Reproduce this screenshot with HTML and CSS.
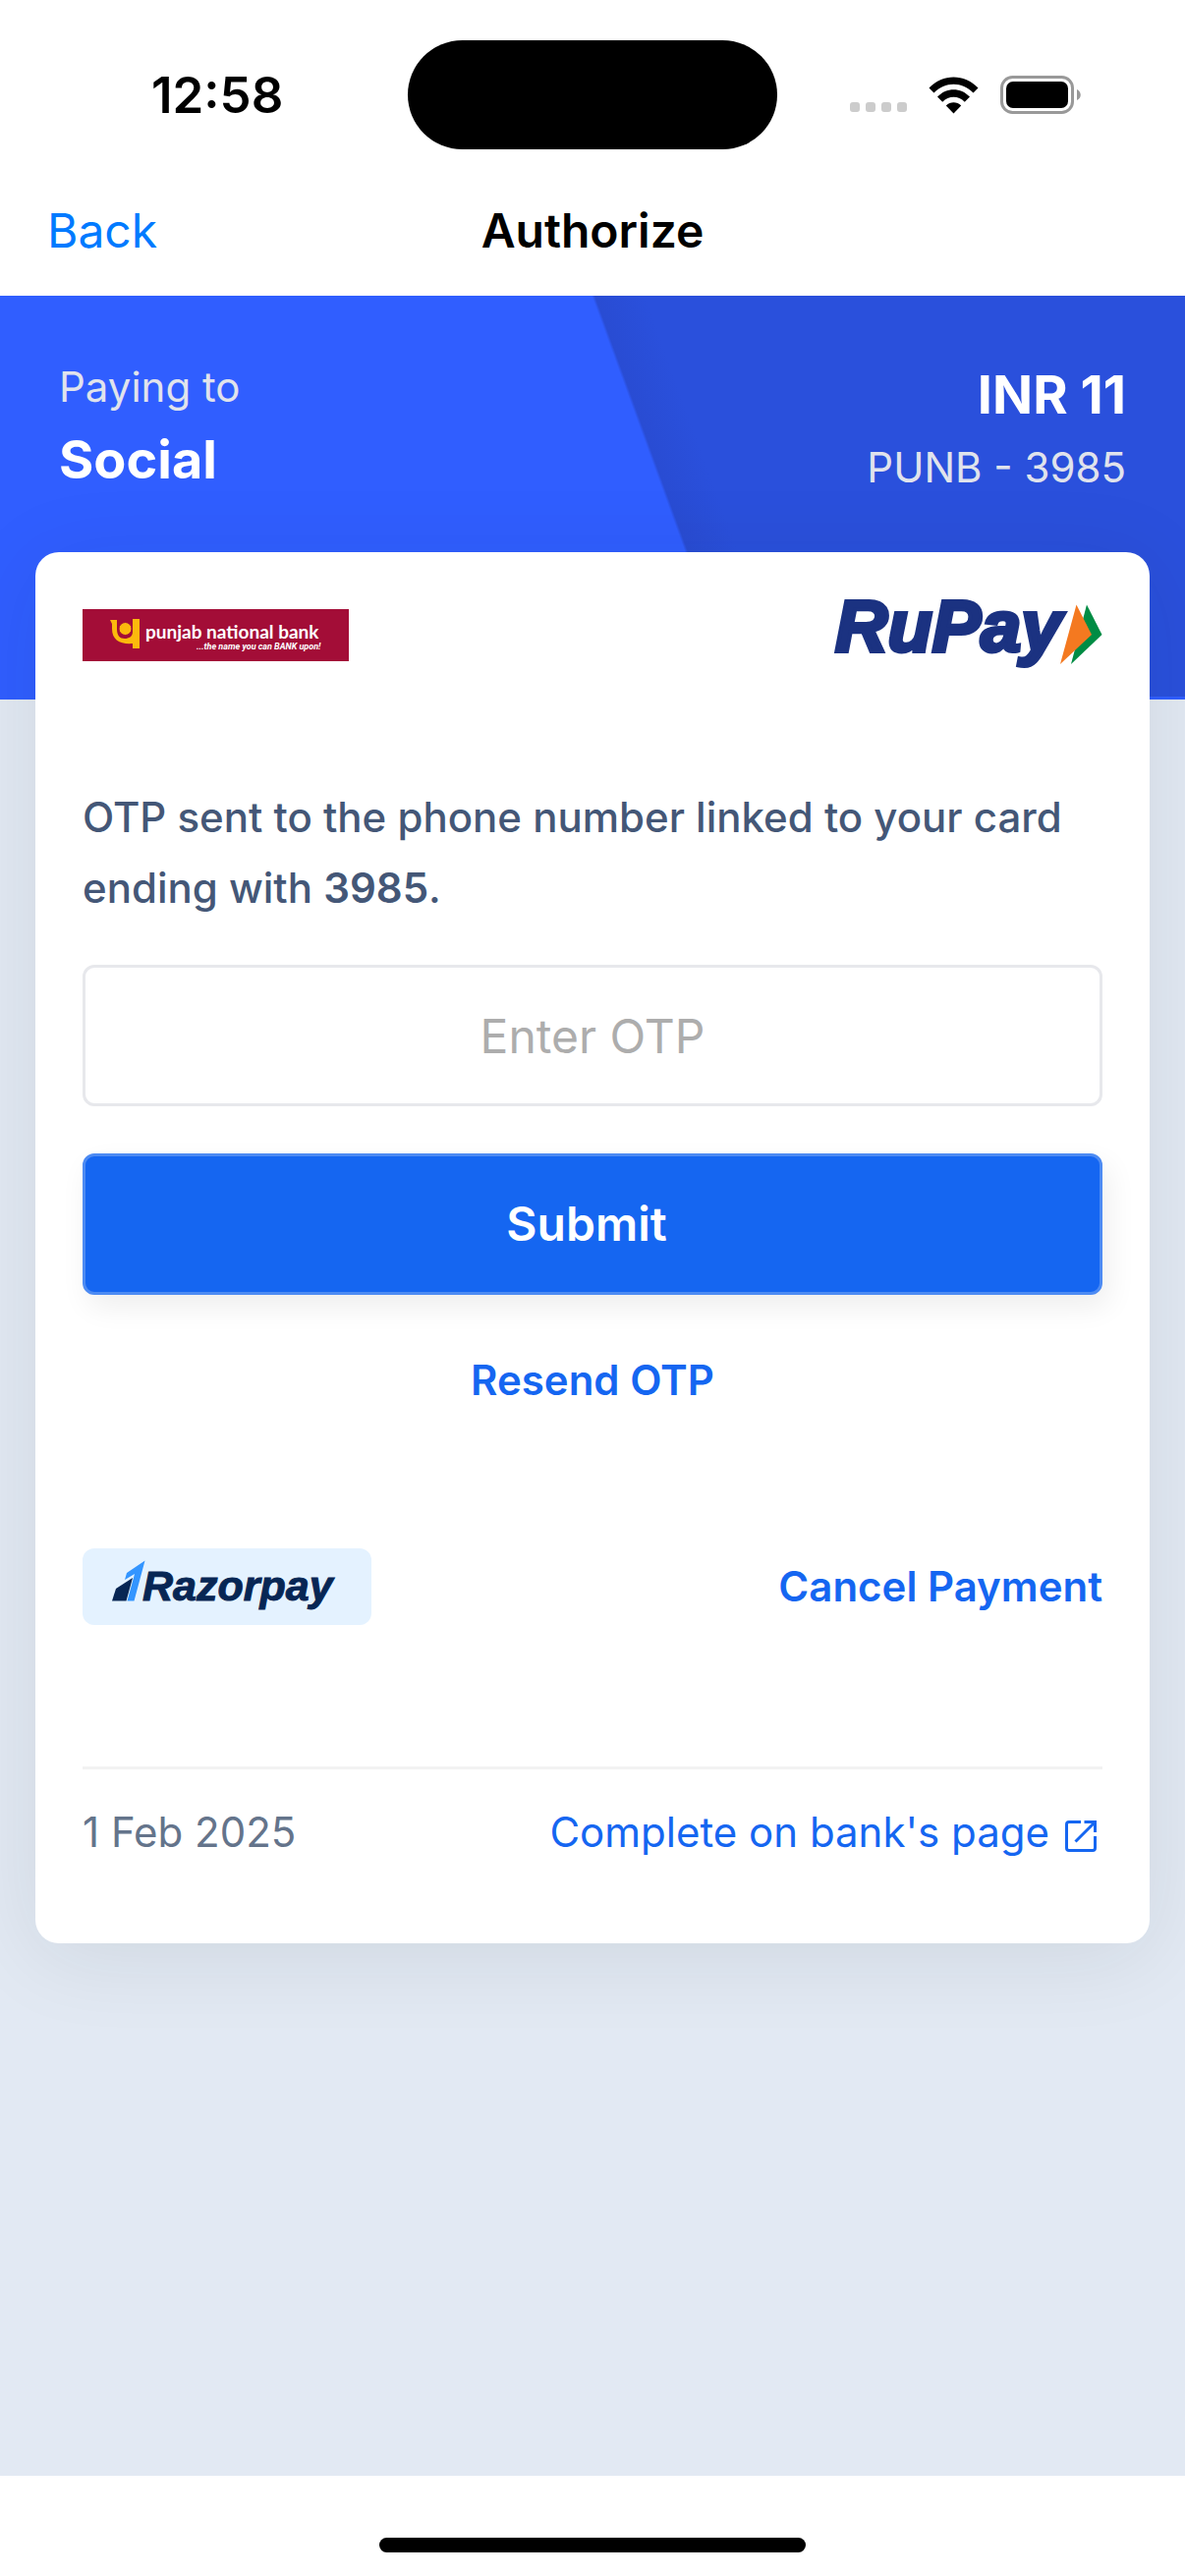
FILE: index.html
```html
<!DOCTYPE html>
<html lang="en">
<head>
<meta charset="utf-8">
<meta name="viewport" content="width=device-width, initial-scale=1">
<title>Authorize</title>
<link rel="stylesheet" href="styles.css">
</head>
<body>
<div class="screen">
  <div class="status">
    <time class="status-time">12:58</time>
    <div class="island"></div>
    <div class="status-icons">
      <svg class="signal" width="58" height="10" viewBox="0 0 58 10" aria-hidden="true">
        <rect width="10" height="10" rx="3"/><rect x="16" width="10" height="10" rx="3"/><rect x="32" width="10" height="10" rx="3"/><rect x="48" width="10" height="10" rx="3"/>
      </svg>
      <svg width="51" height="38" viewBox="0 0 51 38" aria-hidden="true">
        <path d="M0.500 11.500C14.500-3.300 36.500-3.300 50.500 11.500L45.500 16.500C34.500 4.800 16.500 4.800 5.500 16.500Z"/>
        <path d="M9 20.500C18.300 10.700 32.700 10.700 42 20.500L36.800 25.700C30.500 19.200 20.500 19.200 14.200 25.700Z"/>
        <path d="M17.800 29.500C22.200 25.300 28.800 25.300 33.200 29.500L25.500 37.500Z"/>
      </svg>
      <svg width="82" height="39" viewBox="0 0 82 39" aria-hidden="true">
        <rect x="1.500" y="1.500" width="72" height="36" rx="11" fill="none" stroke="#999" stroke-width="3"/>
        <rect x="6" y="6" width="63" height="27" rx="7"/>
        <path d="M78 14C83 16.500 83 23 78 25Z" fill="#999"/>
      </svg>
    </div>
  </div>

  <nav class="nav">
    <a class="nav-back" href="#">Back</a>
    <h1 class="nav-title">Authorize</h1>
  </nav>

  <main class="page">
    <header class="summary">
      <div class="summary-side">
        <span class="summary-label">Paying to</span>
        <strong class="summary-value">Social</strong>
      </div>
      <div class="summary-side summary-side-end">
        <strong class="summary-value">INR 11</strong>
        <span class="summary-label">PUNB - 3985</span>
      </div>
    </header>

    <section class="card">
      <div class="row">
        <svg width="271" height="53" viewBox="0 0 271 53" role="img" aria-label="Punjab National Bank">
          <rect width="271" height="53" fill="#a30d37"/>
          <path d="M28 11h7v9c0 7 3 10 8 10 4 0 8-2 8-7V10h7v30h-7v-5C39 36 30 32 30 20V15z" fill="#fcb90d"/>
          <circle cx="43.500" cy="20" r="6.500" fill="#fcb90d" stroke="#a30d37" stroke-width="1"/>
          <text class="pnb-name" x="64" y="30">punjab national bank</text>
          <text class="pnb-tag" x="116" y="41">...the name you can BANK upon!</text>
        </svg>
        <svg class="rupay" width="273" height="72" viewBox="0 0 273 72" role="img" aria-label="RuPay">
          <text class="rupay-name" x="1" y="53">RuPay</text>
          <path d="M257 5.500 272.500 36 241 66Z" fill="#008c44"/>
          <path d="M246.500 5.500 262 36 230 66Z" fill="#f47920"/>
        </svg>
      </div>

      <form class="otp-form">
        <label class="message" for="otp">OTP sent to the phone number linked to your card ending with <b>3985</b>.</label>
        <input class="otp-input" id="otp" type="text" inputmode="numeric" placeholder="Enter OTP">
        <button class="submit" type="submit">Submit</button>
        <button class="resend" type="button">Resend OTP</button>
      </form>

      <div class="row">
        <div class="razorpay">
          <svg width="240" height="54" viewBox="0 0 240 54" role="img" aria-label="Razorpay">
            <path d="M33.500 0.500 22.500 41.500H15.500L23 14 13 20 15 13Z" fill="#3395ff"/>
            <path d="M21 18 14.500 41.500H0L4 29Z" fill="#072654"/>
            <text class="razorpay-name" x="31" y="41">Razorpay</text>
          </svg>
        </div>
        <a class="cancel" href="#">Cancel Payment</a>
      </div>

      <footer class="row card-footer">
        <span class="date">1 Feb 2025</span>
        <a class="bank-link" href="#">Complete on bank's page
          <svg width="38" height="40" viewBox="0 0 38 40" fill="none" stroke="currentColor" stroke-width="3" aria-hidden="true">
            <path d="M16 9.500H4Q1.500 9.500 1.500 12V36Q1.500 38.500 4 38.500H28Q30.500 38.500 30.500 36V24M19.500 9.500H30.500V20M30.500 9.500 10.500 29.500"/>
          </svg>
        </a>
      </footer>
    </section>
  </main>

  <div class="home"><span class="home-bar"></span></div>
</div>
</body>
</html>
```
FILE: styles.css
```css
* {
  box-sizing: border-box;
}

body {
  margin: 0;
  font-family: Inter, "Liberation Sans", sans-serif;
  font-size: 42px;
  line-height: 66px;
  color: #000;
  background: #fff;
}

a {
  color: inherit;
  text-decoration: none;
}

svg {
  display: block;
  flex: none;
}

.screen {
  display: flex;
  flex-direction: column;
  min-height: 100vh;
}

/* Device status bar */
.status {
  display: grid;
  grid-template-columns: 1fr 376px 1fr;
  align-items: center;
  padding: 41px 0 17px;
}

.status-time {
  padding-left: 154px;
  font-size: 51px;
  font-weight: 600;
}

.island {
  height: 111px;
  border-radius: 56px;
  background: #000;
}

.status-icons {
  display: flex;
  align-items: center;
  justify-content: flex-end;
  gap: 22px;
  padding-right: 106px;
}

.signal {
  align-self: flex-end;
  margin-bottom: 2px;
  fill: #ccc;
}

/* Navigation bar */
.nav {
  display: grid;
  grid-template-columns: 1fr auto 1fr;
  align-items: center;
  min-height: 132px;
  padding: 0 48px;
  font-size: 48px;
}

.nav-back {
  color: #007aff;
}

.nav-title {
  margin: 0;
  font-size: 48px;
  font-weight: 600;
}

/* Payment summary */
.page {
  flex: 1;
  background: #e2e9f3;
}

.summary {
  display: flex;
  justify-content: space-between;
  padding: 60px 60px 203px;
  color: #fff;
  background:
    linear-gradient(70deg, #305eff calc(50% + 69px), #294cd3 calc(50% + 72px), #2a50dc calc(50% + 120px)) 0 0 / 100% calc(100% - 3px) no-repeat
    #305eff;
}

.summary-side {
  display: flex;
  flex-direction: column;
}

.summary-side-end {
  text-align: right;
}

.summary-label {
  color: #e0e3ec;
}

.summary-value {
  font-size: 54px;
  line-height: 82px;
}

/* Card */
.card {
  margin: -150px 36px 0;
  padding: 48px 48px 80px;
  border-radius: 24px;
  background: #fff;
  box-shadow: 0 12px 90px rgba(0, 30, 30, .09);
}

.row {
  display: flex;
  align-items: center;
  justify-content: space-between;
}

.pnb-name {
  font: 700 19px Lato, sans-serif;
  fill: #fff;
}

.pnb-tag {
  font: italic 700 9px Roboto, sans-serif;
  fill: #fff;
}

.rupay {
  overflow: visible;
}

.rupay-name {
  font: italic 700 74px "Liberation Sans", sans-serif;
  fill: #1b3281;
  stroke: #1b3281;
  stroke-width: 4px;
}

.otp-form {
  display: flex;
  flex-direction: column;
  margin: 114px 0 138px;
}

.message {
  line-height: 72px;
  font-weight: 500;
  color: #445777;
}

.message b {
  font-weight: 600;
}

.otp-input {
  width: 100%;
  height: 144px;
  margin: 42px 0 48px;
  padding: 0 42px;
  border: 3px solid #e7e8ec;
  border-radius: 12px;
  background: #fff;
  font: inherit;
  font-size: 48px;
  text-align: center;
}

.otp-input::placeholder {
  color: #adadad;
}

.submit {
  height: 144px;
  padding: 0 54px 0 42px;
  border: 3px solid #4d8bf3;
  border-radius: 12px;
  background: #1566f1;
  box-shadow: 6px 12px 30px rgba(0, 0, 0, .07);
  font: inherit;
  font-size: 48px;
  font-weight: 600;
  color: #fff;
}

.resend {
  align-self: center;
  margin-top: 54px;
  padding: 0;
  border: 0;
  background: none;
  font: inherit;
  font-weight: 600;
  color: #1566f1;
}

.razorpay {
  padding: 12px 24px 12px 30px;
  border-radius: 12px;
  background: #e4f2ff;
}

.razorpay-name {
  font: italic 700 43px "Liberation Sans", sans-serif;
  fill: #072654;
  stroke: #072654;
  stroke-width: 1px;
}

.cancel {
  font-weight: 600;
  color: #1566f1;
}

.card-footer {
  margin-top: 144px;
  padding-top: 31px;
  border-top: 3px solid #f2f2f2;
}

.date {
  color: #64748b;
}

.bank-link {
  display: flex;
  align-items: center;
  gap: 16px;
  color: #1566f1;
}

/* Home indicator */
.home {
  display: flex;
  justify-content: center;
  padding: 63px 0 24px;
}

.home-bar {
  width: 36%;
  height: 15px;
  border-radius: 8px;
  background: #000;
}
```
